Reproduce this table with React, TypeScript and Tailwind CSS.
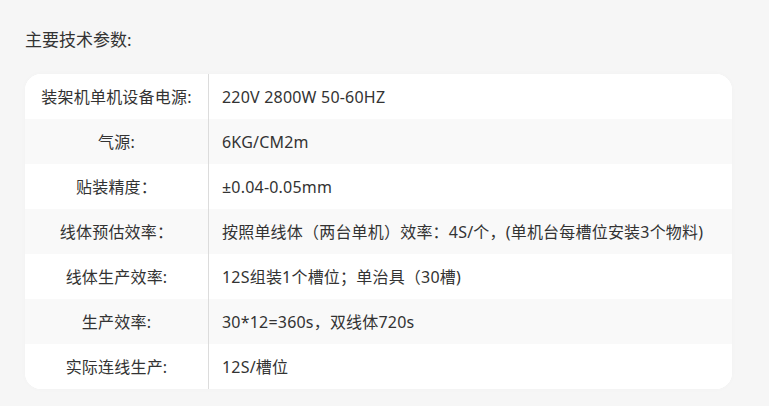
const rows: [string, string][] = [
  ["装架机单机设备电源:", "220V 2800W 50-60HZ"],
  ["气源:", "6KG/CM2m"],
  ["贴装精度：", "±0.04-0.05mm"],
  ["线体预估效率：", "按照单线体（两台单机）效率：4S/个，(单机台每槽位安装3个物料)"],
  ["线体生产效率:", "12S组装1个槽位；单治具（30槽)"],
  ["生产效率:", "30*12=360s，双线体720s"],
  ["实际连线生产:", "12S/槽位"],
];

export default function App() {
  return (
    <div
      className="min-h-[406px] w-full bg-[#f6f6f6] pt-[27px] pl-[25px] pr-[37px] text-[#333]"
      style={{ fontFamily: '"Noto Sans", "Noto Sans CJK SC", sans-serif' }}
    >
      {/* 标题 */}
      <h2 className="text-[17px] leading-[26px]">主要技术参数:</h2>

      {/* 参数表 */}
      <div className="mt-[21px] overflow-hidden rounded-[16px] bg-white shadow-[0_0_6px_rgba(0,0,0,0.02)]">
        {rows.map(([label, value], i) => (
          <div
            key={label}
            className={`flex h-[45px] items-center text-[16px] tracking-[0.2px] ${i % 2 === 1 ? "bg-[#f9f9f9]" : "bg-white"}`}
          >
            <div className="flex h-full w-[184px] items-center justify-center border-r border-[#dcdcdc]">
              {label}
            </div>
            <div className="pl-[13px]">{value}</div>
          </div>
        ))}
      </div>
    </div>
  );
}
